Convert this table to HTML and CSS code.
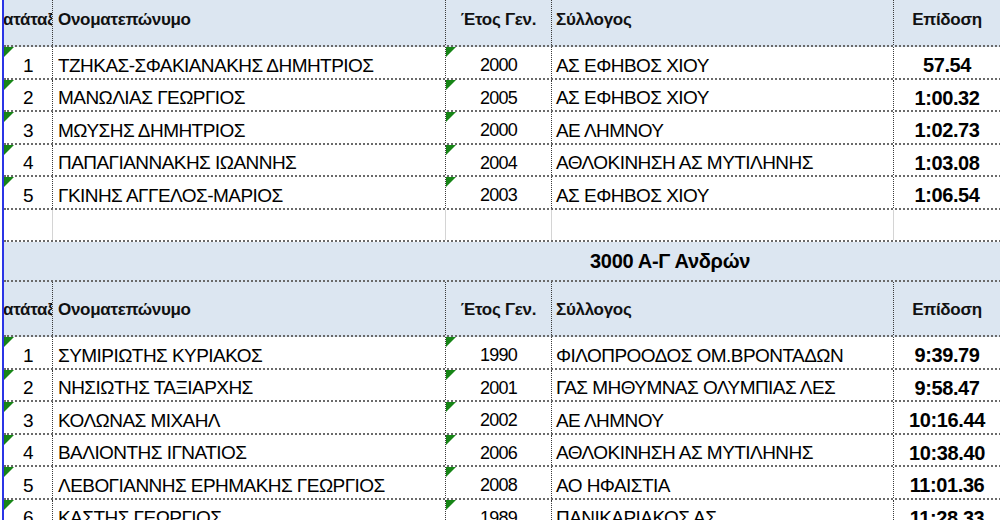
FILE: index.html
```html
<!DOCTYPE html>
<html lang="el">
<head>
<meta charset="utf-8">
<title>Αποτελέσματα</title>
<link rel="stylesheet" href="styles.css">
</head>
<body>
<div class="sheet">
  <div class="row head first">
    <div class="c rank"><span>Κατάταξη</span></div>
    <div class="c name">Ονοματεπώνυμο</div>
    <div class="c year">Έτος Γεν.</div>
    <div class="c club">Σύλλογος</div>
    <div class="c perf">Επίδοση</div>
  </div>
  <div class="row data"><div class="c rank tri">1</div><div class="c name">ΤΖΗΚΑΣ-ΣΦΑΚΙΑΝΑΚΗΣ ΔΗΜΗΤΡΙΟΣ</div><div class="c year tri">2000</div><div class="c club">ΑΣ ΕΦΗΒΟΣ ΧΙΟΥ</div><div class="c perf">57.54</div></div>
  <div class="row data"><div class="c rank tri">2</div><div class="c name">ΜΑΝΩΛΙΑΣ ΓΕΩΡΓΙΟΣ</div><div class="c year tri">2005</div><div class="c club">ΑΣ ΕΦΗΒΟΣ ΧΙΟΥ</div><div class="c perf">1:00.32</div></div>
  <div class="row data"><div class="c rank tri">3</div><div class="c name">ΜΩΥΣΗΣ ΔΗΜΗΤΡΙΟΣ</div><div class="c year tri">2000</div><div class="c club">ΑΕ ΛΗΜΝΟΥ</div><div class="c perf">1:02.73</div></div>
  <div class="row data"><div class="c rank tri">4</div><div class="c name">ΠΑΠΑΓΙΑΝΝΑΚΗΣ ΙΩΑΝΝΗΣ</div><div class="c year tri">2004</div><div class="c club">ΑΘΛΟΚΙΝΗΣΗ ΑΣ ΜΥΤΙΛΗΝΗΣ</div><div class="c perf">1:03.08</div></div>
  <div class="row data"><div class="c rank tri">5</div><div class="c name">ΓΚΙΝΗΣ ΑΓΓΕΛΟΣ-ΜΑΡΙΟΣ</div><div class="c year tri">2003</div><div class="c club">ΑΣ ΕΦΗΒΟΣ ΧΙΟΥ</div><div class="c perf">1:06.54</div></div>
  <div class="row empty"><div class="c rank"></div><div class="c name"></div><div class="c year"></div><div class="c club"></div><div class="c perf"></div></div>
  <div class="row title"><div class="title-text">3000 Α-Γ Ανδρών</div></div>
  <div class="row head">
    <div class="c rank"><span>Κατάταξη</span></div>
    <div class="c name">Ονοματεπώνυμο</div>
    <div class="c year">Έτος Γεν.</div>
    <div class="c club">Σύλλογος</div>
    <div class="c perf">Επίδοση</div>
  </div>
  <div class="row data"><div class="c rank tri">1</div><div class="c name">ΣΥΜΙΡΙΩΤΗΣ ΚΥΡΙΑΚΟΣ</div><div class="c year tri">1990</div><div class="c club">ΦΙΛΟΠΡΟΟΔΟΣ ΟΜ.ΒΡΟΝΤΑΔΩΝ</div><div class="c perf">9:39.79</div></div>
  <div class="row data"><div class="c rank tri">2</div><div class="c name">ΝΗΣΙΩΤΗΣ ΤΑΞΙΑΡΧΗΣ</div><div class="c year tri">2001</div><div class="c club">ΓΑΣ ΜΗΘΥΜΝΑΣ ΟΛΥΜΠΙΑΣ ΛΕΣ</div><div class="c perf">9:58.47</div></div>
  <div class="row data"><div class="c rank tri">3</div><div class="c name">ΚΟΛΩΝΑΣ ΜΙΧΑΗΛ</div><div class="c year tri">2002</div><div class="c club">ΑΕ ΛΗΜΝΟΥ</div><div class="c perf">10:16.44</div></div>
  <div class="row data"><div class="c rank tri">4</div><div class="c name">ΒΑΛΙΟΝΤΗΣ ΙΓΝΑΤΙΟΣ</div><div class="c year tri">2006</div><div class="c club">ΑΘΛΟΚΙΝΗΣΗ ΑΣ ΜΥΤΙΛΗΝΗΣ</div><div class="c perf">10:38.40</div></div>
  <div class="row data"><div class="c rank tri">5</div><div class="c name">ΛΕΒΟΓΙΑΝΝΗΣ ΕΡΗΜΑΚΗΣ ΓΕΩΡΓΙΟΣ</div><div class="c year tri">2008</div><div class="c club">ΑΟ ΗΦΑΙΣΤΙΑ</div><div class="c perf">11:01.36</div></div>
  <div class="row data"><div class="c rank tri">6</div><div class="c name">ΚΑΣΤΗΣ ΓΕΩΡΓΙΟΣ</div><div class="c year tri">1989</div><div class="c club">ΠΑΝΙΚΑΡΙΑΚΟΣ ΑΣ</div><div class="c perf">11:28.33</div></div>
</div>
</body>
</html>
```

FILE: styles.css
```css
html, body {
  margin: 0;
  padding: 0;
  background: #ffffff;
  overflow: hidden;
}
body {
  width: 1000px;
  height: 520px;
  font-family: "Liberation Sans", Arial, sans-serif;
  color: #000000;
}
.sheet {
  margin-left: 2px;
  border-left: 2px solid #2b35e6;
  margin-top: -8px;
  width: 1100px;
  min-height: 600px;
}
.row {
  display: grid;
  grid-template-columns: 48px 393px 106px 342px 111px;
  border-bottom: 2px dotted #6a6a6a;
  box-sizing: border-box;
}
.c {
  display: flex;
  align-items: center;
  overflow: hidden;
  white-space: nowrap;
  position: relative;
  box-sizing: border-box;
}
.c + .c {
  border-left: 1px dotted #3a3a3a;
}
.head {
  height: 55px;
  background: #dce6f1;
}
.head .c {
  padding-top: 3px;
  font-weight: bold;
  font-size: 17px;
  letter-spacing: -0.3px;
  color: #111111;
}
.data {
  height: 32.5px;
}
.data .c {
  padding-top: 7px;
  font-size: 19px;
  letter-spacing: -0.55px;
}
.rank {
  justify-content: center;
}
.rank span {
  flex: none;
}
.name {
  padding-left: 5px;
}
.year {
  justify-content: center;
}
.data .year {
  font-size: 18px;
  letter-spacing: -0.8px;
}
.club {
  padding-left: 4px;
}
.perf {
  justify-content: center;
  padding-right: 4px;
}
.data .perf {
  font-weight: bold;
  font-size: 20px;
  letter-spacing: -0.4px;
}
.empty {
  height: 32.5px;
}
.empty .c + .c {
  border-left: 1px solid #d4d4d4;
}
.title {
  display: flex;
  align-items: center;
  height: 40px;
  background: #dce6f1;
}
.title-text {
  padding-left: 586px;
  font-weight: bold;
  font-size: 20px;
  letter-spacing: -0.3px;
}
.tri::before {
  content: "";
  position: absolute;
  top: 0;
  left: 0;
  border-top: 10px solid #178517;
  border-right: 10px solid transparent;
}
```
